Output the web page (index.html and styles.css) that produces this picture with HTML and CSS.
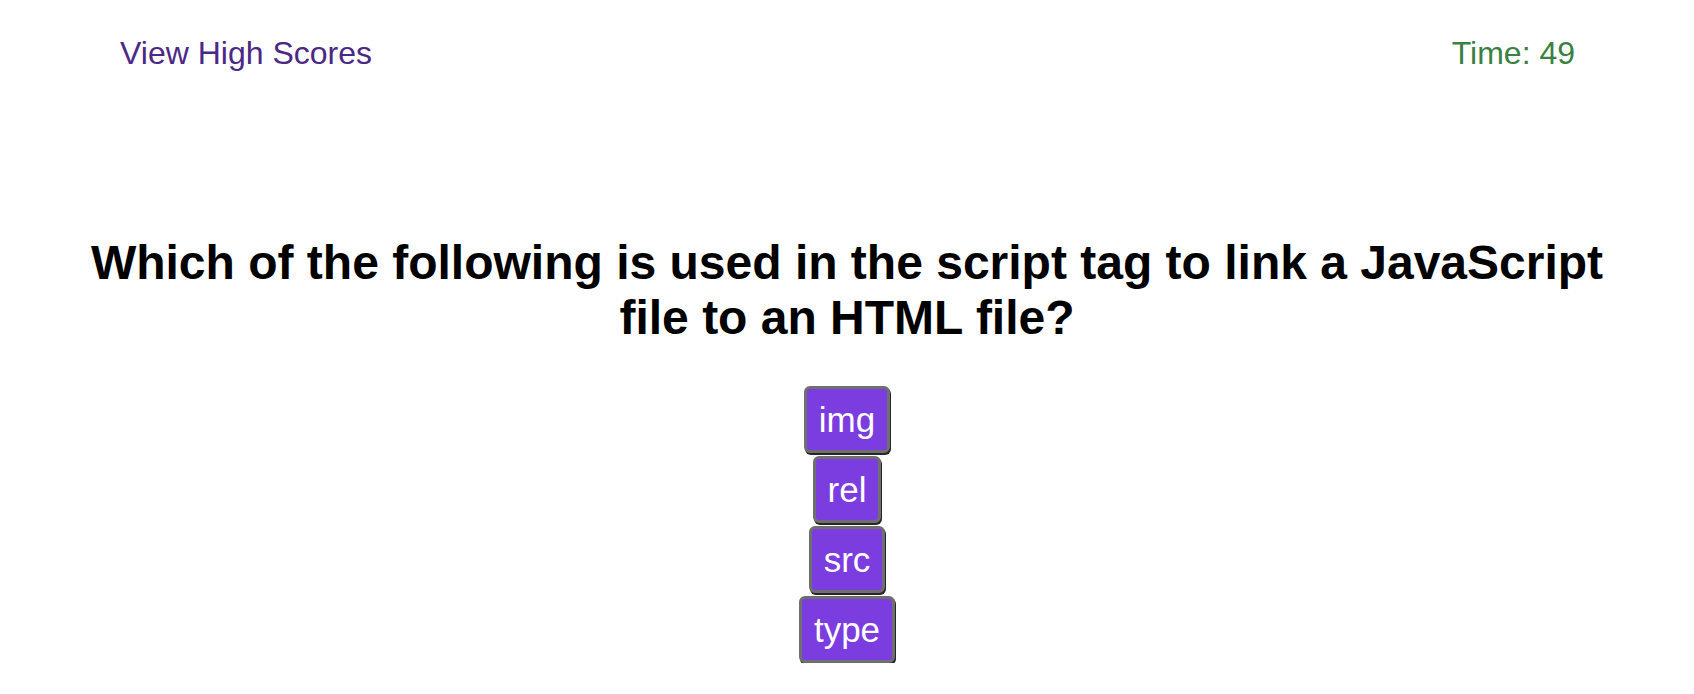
FILE: index.html
```html
<!DOCTYPE html>
<html lang="en">
<head>
<meta charset="utf-8">
<title>Code Quiz</title>
<link rel="stylesheet" href="styles.css">
</head>
<body>
  <header class="top-bar">
    <a class="high-scores" href="#">View High Scores</a>
    <span class="timer">Time: 49</span>
  </header>
  <main class="quiz">
    <h2 class="question">Which of the following is used in the script tag to link a JavaScript file to an HTML file?</h2>
    <div class="choices">
      <button class="choice">img</button>
      <button class="choice">rel</button>
      <button class="choice">src</button>
      <button class="choice">type</button>
    </div>
  </main>
</body>
</html>
```

FILE: styles.css
```css
html, body {
  margin: 0;
  padding: 0;
  background: #ffffff;
}

body {
  font-family: "Liberation Sans", Arial, sans-serif;
  color: #000;
}

.top-bar {
  display: flex;
  justify-content: space-between;
  align-items: center;
  padding: 35px 119px 0 120px;
  font-size: 32px;
  line-height: 37px;
}

.high-scores {
  color: #4b2885;
  text-decoration: none;
}

.timer {
  color: #3b7f45;
}

.quiz {
  display: flex;
  flex-direction: column;
  align-items: center;
  padding-top: 163px;
}

.question {
  margin: 0;
  max-width: 1530px;
  font-size: 48px;
  font-weight: bold;
  line-height: 55px;
  text-align: center;
}

.choices {
  display: flex;
  flex-direction: column;
  align-items: center;
  gap: 3px;
  margin-top: 41px;
}

.choice {
  font-family: "Liberation Sans", Arial, sans-serif;
  font-size: 35px;
  line-height: 41px;
  color: #ffffff;
  background: #7b3ce0;
  border: 3px solid #6f6f6f;
  border-radius: 6px;
  box-shadow: 1px 2px 0 #262626;
  padding: 10px 12px;
  cursor: pointer;
}
```
